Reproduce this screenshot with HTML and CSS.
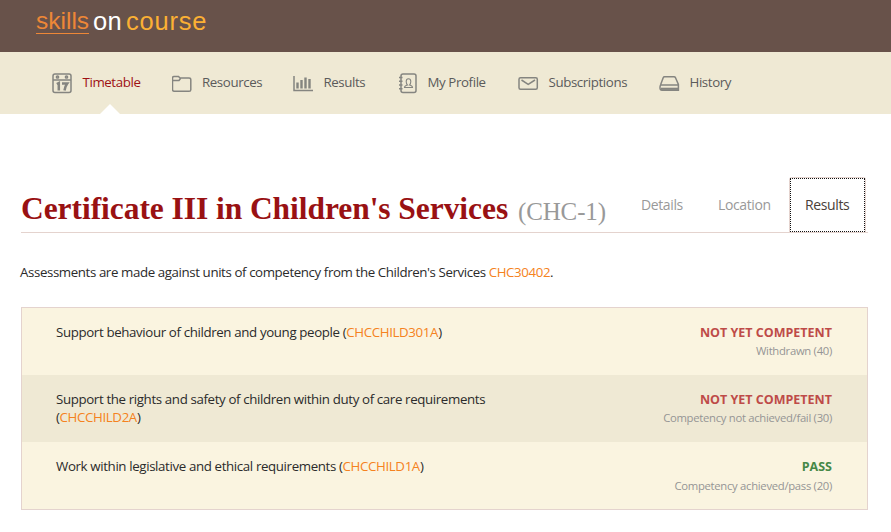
FILE: index.html
```html
<!DOCTYPE html>
<html lang="en">
<head>
<meta charset="utf-8">
<title>Skills on Course</title>
<link rel="stylesheet" href="styles.css">
</head>
<body>
<header class="top"><div class="logo"><span class="skills">skills</span><span class="on">on</span><span class="course">course</span></div></header>
<nav class="nav">
  <a class="item active"><svg width="21" height="21" viewBox="0 0 21 21"><rect x="1" y="1" width="18" height="18.5" rx="2"/><path d="M1 7h18" /><circle cx="5.5" cy="4" r="1.1"/><circle cx="14.5" cy="4" r="1.1"/><path class="thick" d="M4.8 11l2-1V17.500M10 10.500h5.200c-1.500 2-2.300 4-2.700 7"/></svg><span>Timetable</span></a>
  <a class="item"><svg width="21" height="21" viewBox="0 0 21 21"><path d="M.5 16.500V5Q.5 3.500 2 3.500h4.500L8 5h9q1.800 0 1.800 1.700v10q0 1.600-1.700 1.600H2.200Q.5 18.300.5 16.500zM.5 7.500H7l1.500-2"/></svg><span>Resources</span></a>
  <a class="item"><svg width="21" height="21" viewBox="0 0 21 21"><path d="M1 3v14.500h19"/><path class="bars" d="M4.500 9.500v6M8.500 7v8.500M12.500 4.500v11M16.500 6v9.500"/></svg><span>Results</span></a>
  <a class="item"><svg width="21" height="21" viewBox="0 0 21 21"><rect x="4" y="1" width="15" height="18.500" rx="2"/><path d="M2 4.500h3.500M2 8.200h3.500M2 12h3.500M2 15.800h3.500"/><path class="thin" d="M7.500 14.500q0-1.700 3-2.500-1.300-1.500-1.300-3.500 0-2.800 2.300-2.800t2.300 2.800q0 2-1.300 3.500 3 .8 3 2.500z"/></svg><span>My Profile</span></a>
  <a class="item"><svg width="21" height="21" viewBox="0 0 21 21"><rect x="1" y="4.700" width="18.300" height="11.600" rx="1.500"/><path d="M3.500 7l6.700 4.300L17 7"/></svg><span>Subscriptions</span></a>
  <a class="item"><svg width="21" height="21" viewBox="0 0 21 21"><path d="M5.500 3.700h9.500q1 0 1.500 1l2.900 6.700v5.800H3Q.8 17.200 1 14.300q0-1.300.6-2.500l2.600-7.100q.4-1 1.300-1zM1.500 12h17.800"/><path class="base" d="M2 15.800h17"/></svg><span>History</span></a>
</nav>
<main class="main">
  <div class="heading">
    <h1><span class="title">Certificate III in Children's Services</span><small>(CHC-1)</small></h1>
    <div class="tabs"><a class="details">Details</a><a class="location">Location</a><a class="current"><span>Results</span></a></div>
  </div>
  <p class="intro">Assessments are made against units of competency from the Children's Services <a>CHC30402</a>.</p>
  <ul class="units">
    <li><p>Support behaviour of children and young people (<a>CHCCHILD301A</a>)</p><div class="result"><strong>NOT YET COMPETENT</strong><span>Withdrawn (40)</span></div></li>
    <li><p>Support the rights and safety of children within duty of care requirements (<a>CHCCHILD2A</a>)</p><div class="result"><strong>NOT YET COMPETENT</strong><span>Competency not achieved/fail (30)</span></div></li>
    <li><p>Work within legislative and ethical requirements (<a>CHCCHILD1A</a>)</p><div class="result pass"><strong>PASS</strong><span>Competency achieved/pass (20)</span></div></li>
  </ul>
</main>
</body>
</html>
```
FILE: styles.css
```css
* { box-sizing: border-box; }
body { margin: 0; background: #fff; color: #2b2b2b; font: 450 13.300px/18px "Open Sans", "Noto Sans", sans-serif; letter-spacing: -.4px; overflow: hidden; }
h1, p, ul { margin: 0; padding: 0; }
.top { height: 52px; background: #68524a; padding: 7px 0 0 36px; }
.logo { display: flex; font: 24.500px/28px "Liberation Sans", Arial, sans-serif; letter-spacing: 0; }
.skills { color: #ed8737; border-bottom: 1px solid #ed8737; width: 53px; height: 27px; }
.on { color: #fff; width: 33px; padding-left: 4px; font-size: 25.500px; letter-spacing: .3px; }
.course { color: #fbb034; padding-left: 4px; font-size: 25.500px; letter-spacing: .8px; }
.nav { height: 62px; background: #efe9d4; display: grid; grid-template-columns: 119.5px 121.500px 104px 121px 141px 110px; padding-left: 52px; }
.item { display: flex; align-items: center; gap: 9.500px; color: #5b5b5b; position: relative; }
.item > span { padding-bottom: 2px; }
.item svg { fill: none; stroke: #858580; stroke-width: 1.500; }
.item svg .thick { stroke-width: 2.500; }
.item svg .bars { stroke-width: 2.400; }
.item svg .thin { stroke-width: 1.100; }
.item svg .base { stroke-width: 2.200; }
.active { color: #9e1113; }
.active::after { content: ""; position: absolute; left: 48px; bottom: 0; border: 10px solid transparent; border-top: 0; border-bottom-color: #fff; }
.main { padding: 64px 23px 0 21px; }
.heading { display: flex; height: 55px; border-bottom: 1px solid #e4d3ce; }
h1 { width: 605px; font: bold 31.500px/62px "Liberation Serif", serif; letter-spacing: -.06px; color: #991113; white-space: nowrap; display: flex; }
.title { width: 497px; }
h1 small { font-weight: normal; font-size: 25px; letter-spacing: -.15px; line-height: 67px; color: #999; }
.tabs { display: flex; color: #999; font-size: 14px; letter-spacing: -.38px; line-height: 53px; }
.details { width: 77px; padding-left: 15px; }
.location { width: 86px; padding-left: 15px; }
.current { width: 77px; height: 55px; margin-top: -1px; border: 1px solid #e4d3ce; border-bottom: 0; border-radius: 3px 3px 0 0; color: #4a4039; background: #fff; }
.current span { display: block; height: 54px; border: 1px dotted #111; padding-left: 14px; line-height: 51px; }
.intro { margin-top: 30px; margin-left: -1px; white-space: nowrap; }
.intro a, .units a { color: #f58220; }
.units { list-style: none; margin-top: 26px; border: 1px solid #e4d3ce; background: #faf4e0; }
.units li { display: flex; justify-content: space-between; height: 67px; padding: 15px 35px 0 34px; }
.units li:nth-child(2) { background: #efe9d4; }
.units p { width: 445px; letter-spacing: -.37px; }
.result { display: flex; flex-direction: column; align-items: flex-end; padding-top: 1px; color: #959595; font-size: 11.300px; letter-spacing: -.3px; }
.result strong { color: #be4b48; font-size: 12.500px; letter-spacing: 0; line-height: 18px; }
.result.pass strong { color: #468847; }
.result span { line-height: 18px; }
.result.pass span { line-height: 19px; }
```
